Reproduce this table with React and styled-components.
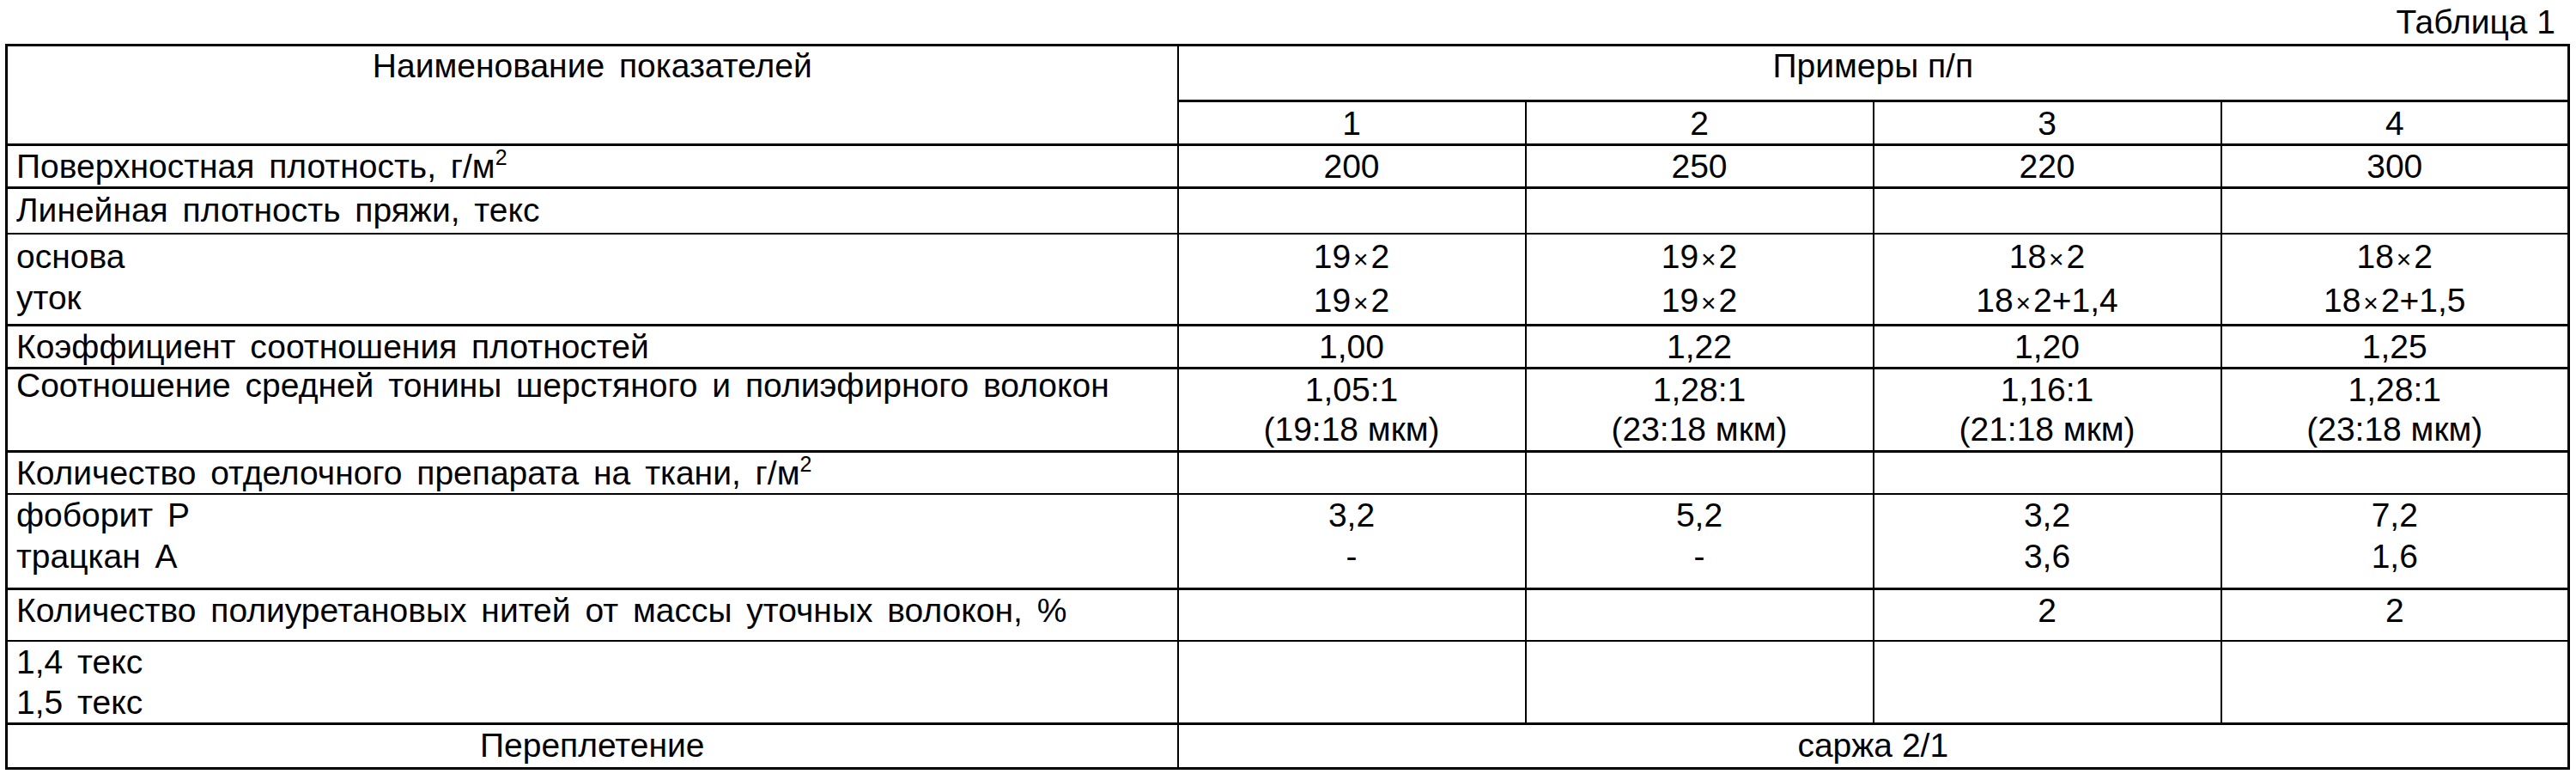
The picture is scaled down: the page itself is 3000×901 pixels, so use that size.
import React from 'react';
import styled, { createGlobalStyle, css } from 'styled-components';

const GlobalStyle = createGlobalStyle`
  html, body {
    margin: 0;
    padding: 0;
    background: #fff;
  }
  body {
    font-family: "Liberation Sans", Arial, sans-serif;
    color: #000;
  }
`;

const Page = styled.div`
  width: 3000px;
  padding: 0 10px 0 6px;
  box-sizing: border-box;
`;

const Caption = styled.div`
  height: 51px;
  padding: 2px 14px 0 0;
  box-sizing: border-box;
  font-size: 39px;
  line-height: 48px;
  text-align: right;
`;

const Table = styled.table`
  width: 2984px;
  border-collapse: collapse;
  table-layout: fixed;
  border: 3px solid #000;
  font-size: 39px;
`;

const Row = styled.tr`
  height: ${(p) => p.$h}px;
  ${(p) =>
    p.$thin &&
    css`
      & > td {
        border-top-width: 2px;
      }
    `}
`;

const Cell = styled.td`
  border: 2px solid #000;
  border-top-width: 3px;
  padding: ${(p) => p.$pt ?? 1}px 10px 0;
  line-height: ${(p) => p.$lh || 45}px;
  vertical-align: top;
  text-align: ${(p) => (p.$center ? 'center' : 'left')};
  white-space: nowrap;
`;

const LabelCell = styled(Cell)`
  word-spacing: 6px;
`;

const Sup = styled.sup`
  font-size: 25px;
  line-height: 0;
  vertical-align: 15px;
`;

const Times = styled.span`
  display: inline-block;
  font-size: 30px;
  margin: 0 3px;
`;

const x = (a, b) => (
  <>
    {a}
    <Times>×</Times>
    {b}
  </>
);

const rows = [
  { h: 50, label: <>Поверхностная плотность, г/м<Sup>2</Sup></>, values: ['200', '250', '220', '300'] },
  { h: 53, pt: 2, label: 'Линейная плотность пряжи, текс', values: ['', '', '', ''] },
  {
    h: 103,
    thin: true,
    lh: 48,
    pt: 2,
    label: <>основа<br />уток</>,
    values: [
      <>{x('19', '2')}<br />{x('19', '2')}</>,
      <>{x('19', '2')}<br />{x('19', '2')}</>,
      <>{x('18', '2')}<br />{x('18', '2+1,4')}</>,
      <>{x('18', '2')}<br />{x('18', '2+1,5')}</>,
    ],
  },
  { h: 50, label: 'Коэффициент соотношения плотностей', values: ['1,00', '1,22', '1,20', '1,25'] },
  {
    h: 97,
    lh: 46,
    pt: 1,
    labelLh: 36,
    label: 'Соотношение средней тонины шерстяного и полиэфирного волокон',
    values: [
      <>1,05:1<br />(19:18 мкм)</>,
      <>1,28:1<br />(23:18 мкм)</>,
      <>1,16:1<br />(21:18 мкм)</>,
      <>1,28:1<br />(23:18 мкм)</>,
    ],
  },
  { h: 50, label: <>Количество отделочного препарата на ткани, г/м<Sup>2</Sup></>, values: ['', '', '', ''] },
  {
    h: 110,
    thin: true,
    lh: 48,
    pt: 0,
    label: <>фоборит Р<br />трацкан А</>,
    values: [<>3,2<br />-</>, <>5,2<br />-</>, <>3,2<br />3,6</>, <>7,2<br />1,6</>],
  },
  { h: 61, label: 'Количество полиуретановых нитей от массы уточных волокон, %', values: ['', '', '2', '2'] },
  { h: 95, thin: true, lh: 47, pt: 0, label: <>1,4 текс<br />1,5 текс</>, values: ['', '', '', ''] },
];

export default function App() {
  return (
    <>
      <GlobalStyle />
      <Page>
        <Caption>Таблица 1</Caption>
        <Table>
          <colgroup>
            <col style={{ width: 1364 }} />
            <col style={{ width: 405 }} />
            <col style={{ width: 405 }} />
            <col style={{ width: 405 }} />
            <col style={{ width: 405 }} />
          </colgroup>
          <tbody>
            <Row $h={65}>
              <LabelCell $center $pt={0} rowSpan={2}>Наименование показателей</LabelCell>
              <Cell $center $pt={0} colSpan={4}>Примеры п/п</Cell>
            </Row>
            <Row $h={51}>
              {['1', '2', '3', '4'].map((n) => (
                <Cell $center $pt={2} key={n}>{n}</Cell>
              ))}
            </Row>
            {rows.map((r, i) => (
              <Row $h={r.h} $thin={r.thin} key={i}>
                <LabelCell $lh={r.labelLh || r.lh} $pt={r.pt}>{r.label}</LabelCell>
                {r.values.map((v, j) => (
                  <Cell $center $lh={r.lh} $pt={r.pt} key={j}>{v}</Cell>
                ))}
              </Row>
            ))}
            <Row $h={52}>
              <LabelCell $center>Переплетение</LabelCell>
              <Cell $center colSpan={4}>саржа 2/1</Cell>
            </Row>
          </tbody>
        </Table>
      </Page>
    </>
  );
}
